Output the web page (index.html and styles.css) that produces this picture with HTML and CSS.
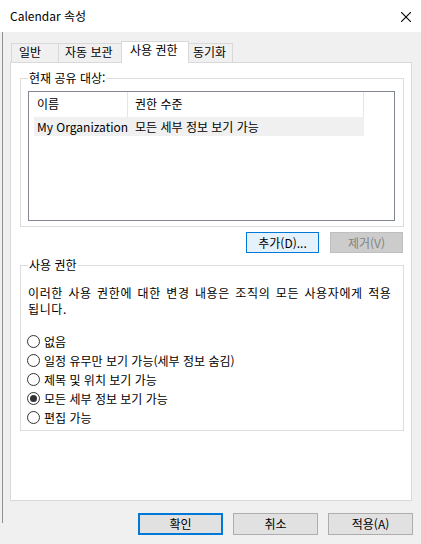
FILE: index.html
```html
<!DOCTYPE html>
<html lang="ko">
<head>
<meta charset="utf-8">
<title>Calendar 속성</title>
<link rel="stylesheet" href="styles.css">
</head>
<body>
<div class="window">
  <div class="titlebar">
    <span class="title">Calendar 속성</span>
    <svg class="close" width="10" height="10" viewBox="0 0 10 10"><path d="M0 0L10 10M10 0L0 10" stroke="#000" stroke-width="1.1" fill="none"/></svg>
  </div>
  <div class="client">
    <div class="tabs">
      <div class="tab tab-general">일반</div>
      <div class="tab tab-archive">자동 보관</div>
      <div class="tab tab-active">사용 권한</div>
      <div class="tab tab-sync">동기화</div>
    </div>
    <div class="panel">
      <fieldset class="group group-share">
        <legend>현재 공유 대상:</legend>
        <div class="list">
          <div class="list-row list-head">
            <div class="cell c1">이름</div>
            <div class="cell c2">권한 수준</div>
          </div>
          <div class="list-row list-item">
            <div class="cell c1">My Organization</div>
            <div class="cell c2">모든 세부 정보 보기 가능</div>
          </div>
        </div>
      </fieldset>
      <div class="list-actions">
        <button class="btn btn-small btn-focus">추가(D)...</button>
        <button class="btn btn-small btn-disabled">제거(V)</button>
      </div>
      <fieldset class="group group-perm">
        <legend>사용 권한</legend>
        <p class="desc">이러한 사용 권한에 대한 변경 내용은 조직의 모든 사용자에게 적용 됩니다.</p>
        <div class="radios">
          <div class="radio"><span class="radio-box"></span>없음</div>
          <div class="radio"><span class="radio-box"></span>일정 유무만 보기 가능(세부 정보 숨김)</div>
          <div class="radio"><span class="radio-box"></span>제목 및 위치 보기 가능</div>
          <div class="radio"><span class="radio-box checked"></span>모든 세부 정보 보기 가능</div>
          <div class="radio"><span class="radio-box"></span>편집 가능</div>
        </div>
      </fieldset>
    </div>
    <div class="footer">
      <button class="btn btn-large btn-default">확인</button>
      <button class="btn btn-large">취소</button>
      <button class="btn btn-large">적용(A)</button>
    </div>
  </div>
</div>
</body>
</html>
```
FILE: styles.css
```css
* { box-sizing: border-box; }
html, body { margin: 0; padding: 0; }
body {
  background: #f0f0f0;
  font-family: "Noto Sans CJK KR", "Noto Sans", sans-serif;
  font-size: 12px;
  color: #000;
}
.window {
  width: 421px;
  height: 544px;
  overflow: hidden;
  background: #f0f0f0;
}
.titlebar {
  height: 32px;
  background: #fff;
  display: flex;
  align-items: center;
  justify-content: space-between;
  padding: 0 10px 0 10px;
}
.title { line-height: 16px; }
.close { display: block; margin-top: 1px; }
.client {
  margin-left: 2px;
  border-left: 1px solid #8e8e8e;
  height: 491px;
}
.tabs {
  height: 30px;
  display: flex;
  align-items: flex-end;
  padding-left: 8px;
}
.tab {
  height: 19px;
  border: 1px solid #d9d9d9;
  border-bottom: none;
  background: #f0f0f0;
  line-height: 16px;
  white-space: nowrap;
  margin-left: -1px;
}
.tab-general { width: 48px; padding-left: 7px; margin-left: 0; }
.tab-archive { width: 64px; padding-left: 6px; }
.tab-active {
  position: relative;
  z-index: 1;
  width: 68px;
  height: 22px;
  padding-left: 8px;
  background: #fff;
  margin-bottom: -1px;
}
.tab-sync { width: 45px; padding-left: 4px; }
.panel {
  margin-left: 7px;
  width: 402px;
  height: 439px;
  border: 1px solid #d9d9d9;
  background: #fff;
}
.group {
  margin: 0 0 0 9px;
  width: 384px;
  border: 1px solid #dcdcdc;
  min-width: 0;
}
.group legend {
  padding: 0 1px;
  line-height: 16px;
}
.group-share {
  margin-top: 7px;
  padding: 5px 8px 5px 7px;
}
.list {
  width: 367px;
  height: 130px;
  border: 1px solid #828790;
  background: #fff;
}
.list-row {
  display: flex;
  margin-left: 5px;
  width: 330px;
}
.list-head { height: 25px; }
.list-head .cell {
  border-right: 1px solid #e5e5e5;
  line-height: 23px;
}
.list-item {
  height: 19px;
  background: #f0f0f0;
  line-height: 19px;
}
.cell { white-space: nowrap; overflow: hidden; }
.c1 { width: 94px; padding-left: 3px; }
.c2 { flex: 1; padding-left: 7px; }
.list-actions {
  display: flex;
  justify-content: flex-end;
  gap: 11px;
  margin: 5px 0 0 9px;
  width: 383px;
}
.btn {
  font: inherit;
  color: #000;
  background: #e1e1e1;
  border: 1px solid #adadad;
  padding: 0;
  margin: 0;
  text-align: center;
  line-height: 16px;
}
.btn-small { width: 73px; height: 21px; }
.btn-large { width: 85px; height: 22px; }
.btn-focus { background: #e5f1fb; border-color: #0078d7; }
.btn-disabled { background: #cccccc; border-color: #bfbfbf; color: #838383; }
.btn-default { border: 2px solid #0078d7; }
.group-perm {
  margin-top: 4px;
  padding: 12px 8px 3px 7px;
}
.desc {
  margin: 0;
  line-height: 16px;
  letter-spacing: 0.6px;
  word-spacing: 1.5px;
}
.radios { margin-top: 15px; }
.radio {
  height: 19px;
  display: flex;
  align-items: center;
  line-height: 16px;
  white-space: nowrap;
}
.radio-box {
  width: 13px;
  height: 13px;
  border: 1px solid #333;
  border-radius: 50%;
  margin: 0 4px 0 -1px;
  background: #fff;
  display: flex;
  align-items: center;
  justify-content: center;
  flex: none;
}
.radio-box.checked::after {
  content: "";
  width: 7px;
  height: 7px;
  border-radius: 50%;
  background: #333;
}
.footer {
  display: flex;
  justify-content: flex-end;
  gap: 10px;
  margin-top: 12px;
  padding-right: 8px;
}
```
